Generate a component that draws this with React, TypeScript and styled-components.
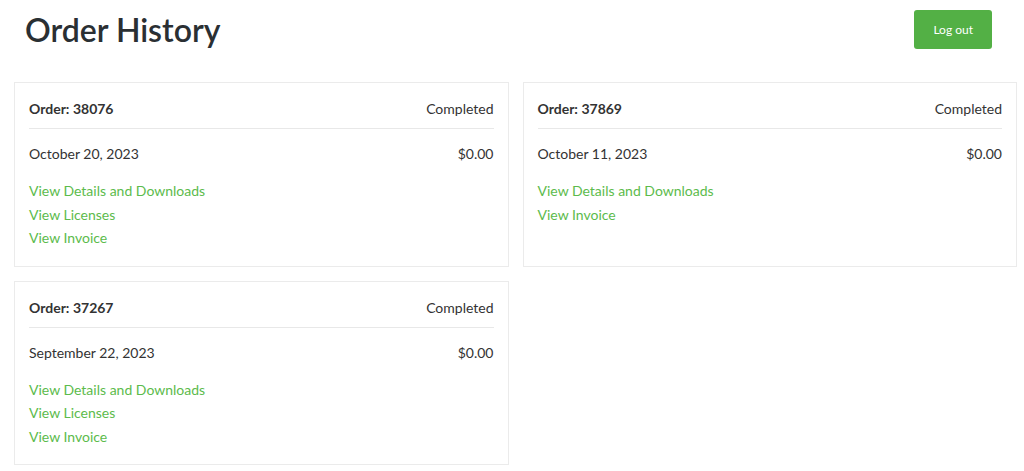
import React from "react";
import styled, { createGlobalStyle } from "styled-components";

const GlobalStyle = createGlobalStyle`
  html, body {
    margin: 0;
    padding: 0;
    background: #ffffff;
  }

  body {
    font-family: "Lato", "Noto Sans", sans-serif;
    color: #333333;
  }
`;

const Page = styled.div`
  padding: 10px 7px 0 14px;
`;

const Header = styled.header`
  align-items: center;
  display: flex;
  justify-content: space-between;
  margin-bottom: 33px;
  padding: 0 25px 0 11px;
`;

const Title = styled.h1`
  color: #2a2f33;
  font-size: 32px;
  font-weight: 600;
  line-height: 39px;
  margin: 0;
`;

const LogoutButton = styled.button`
  background: #53b045;
  border: none;
  border-radius: 3px;
  color: #ffffff;
  cursor: pointer;
  font-family: inherit;
  font-size: 12px;
  height: 39px;
  padding: 0 19px;
`;

const OrderGrid = styled.div`
  display: grid;
  gap: 14px 14px;
  grid-template-columns: 1fr 1fr;
`;

const Card = styled.section`
  border: 1px solid #ebebeb;
  padding: 0 14px 16px;
`;

const Row = styled.div<{ divided?: boolean }>`
  align-items: center;
  border-bottom: ${(props) => (props.divided ? "1px solid #e8e8e8" : "none")};
  display: flex;
  font-size: 14px;
  justify-content: space-between;
  line-height: 20px;
  padding: ${(props) => (props.divided ? "16px 0 9px" : "15px 0 15px")};
`;

const OrderNumber = styled.span`
  font-weight: 700;
`;

const Links = styled.div`
  display: flex;
  flex-direction: column;
  align-items: flex-start;
`;

const OrderLink = styled.a`
  color: #5cbb4c;
  font-size: 14px;
  line-height: 23.5px;
  text-decoration: none;
`;

type Order = {
  id: string;
  date: string;
  total: string;
  status: string;
  links: string[];
};

const orders: Order[] = [
  {
    id: "38076",
    date: "October 20, 2023",
    total: "$0.00",
    status: "Completed",
    links: ["View Details and Downloads", "View Licenses", "View Invoice"],
  },
  {
    id: "37869",
    date: "October 11, 2023",
    total: "$0.00",
    status: "Completed",
    links: ["View Details and Downloads", "View Invoice"],
  },
  {
    id: "37267",
    date: "September 22, 2023",
    total: "$0.00",
    status: "Completed",
    links: ["View Details and Downloads", "View Licenses", "View Invoice"],
  },
];

const OrderCard = ({ order }: { order: Order }) => (
  <Card>
    <Row divided>
      <OrderNumber>Order: {order.id}</OrderNumber>
      <span>{order.status}</span>
    </Row>
    <Row>
      <span>{order.date}</span>
      <span>{order.total}</span>
    </Row>
    <Links>
      {order.links.map((label) => (
        <OrderLink key={label} href="#">
          {label}
        </OrderLink>
      ))}
    </Links>
  </Card>
);

export default function App() {
  return (
    <>
      <GlobalStyle />
      <Page>
        <Header>
          <Title>Order History</Title>
          <LogoutButton>Log out</LogoutButton>
        </Header>
        <OrderGrid>
          {orders.map((order) => (
            <OrderCard key={order.id} order={order} />
          ))}
        </OrderGrid>
      </Page>
    </>
  );
}
